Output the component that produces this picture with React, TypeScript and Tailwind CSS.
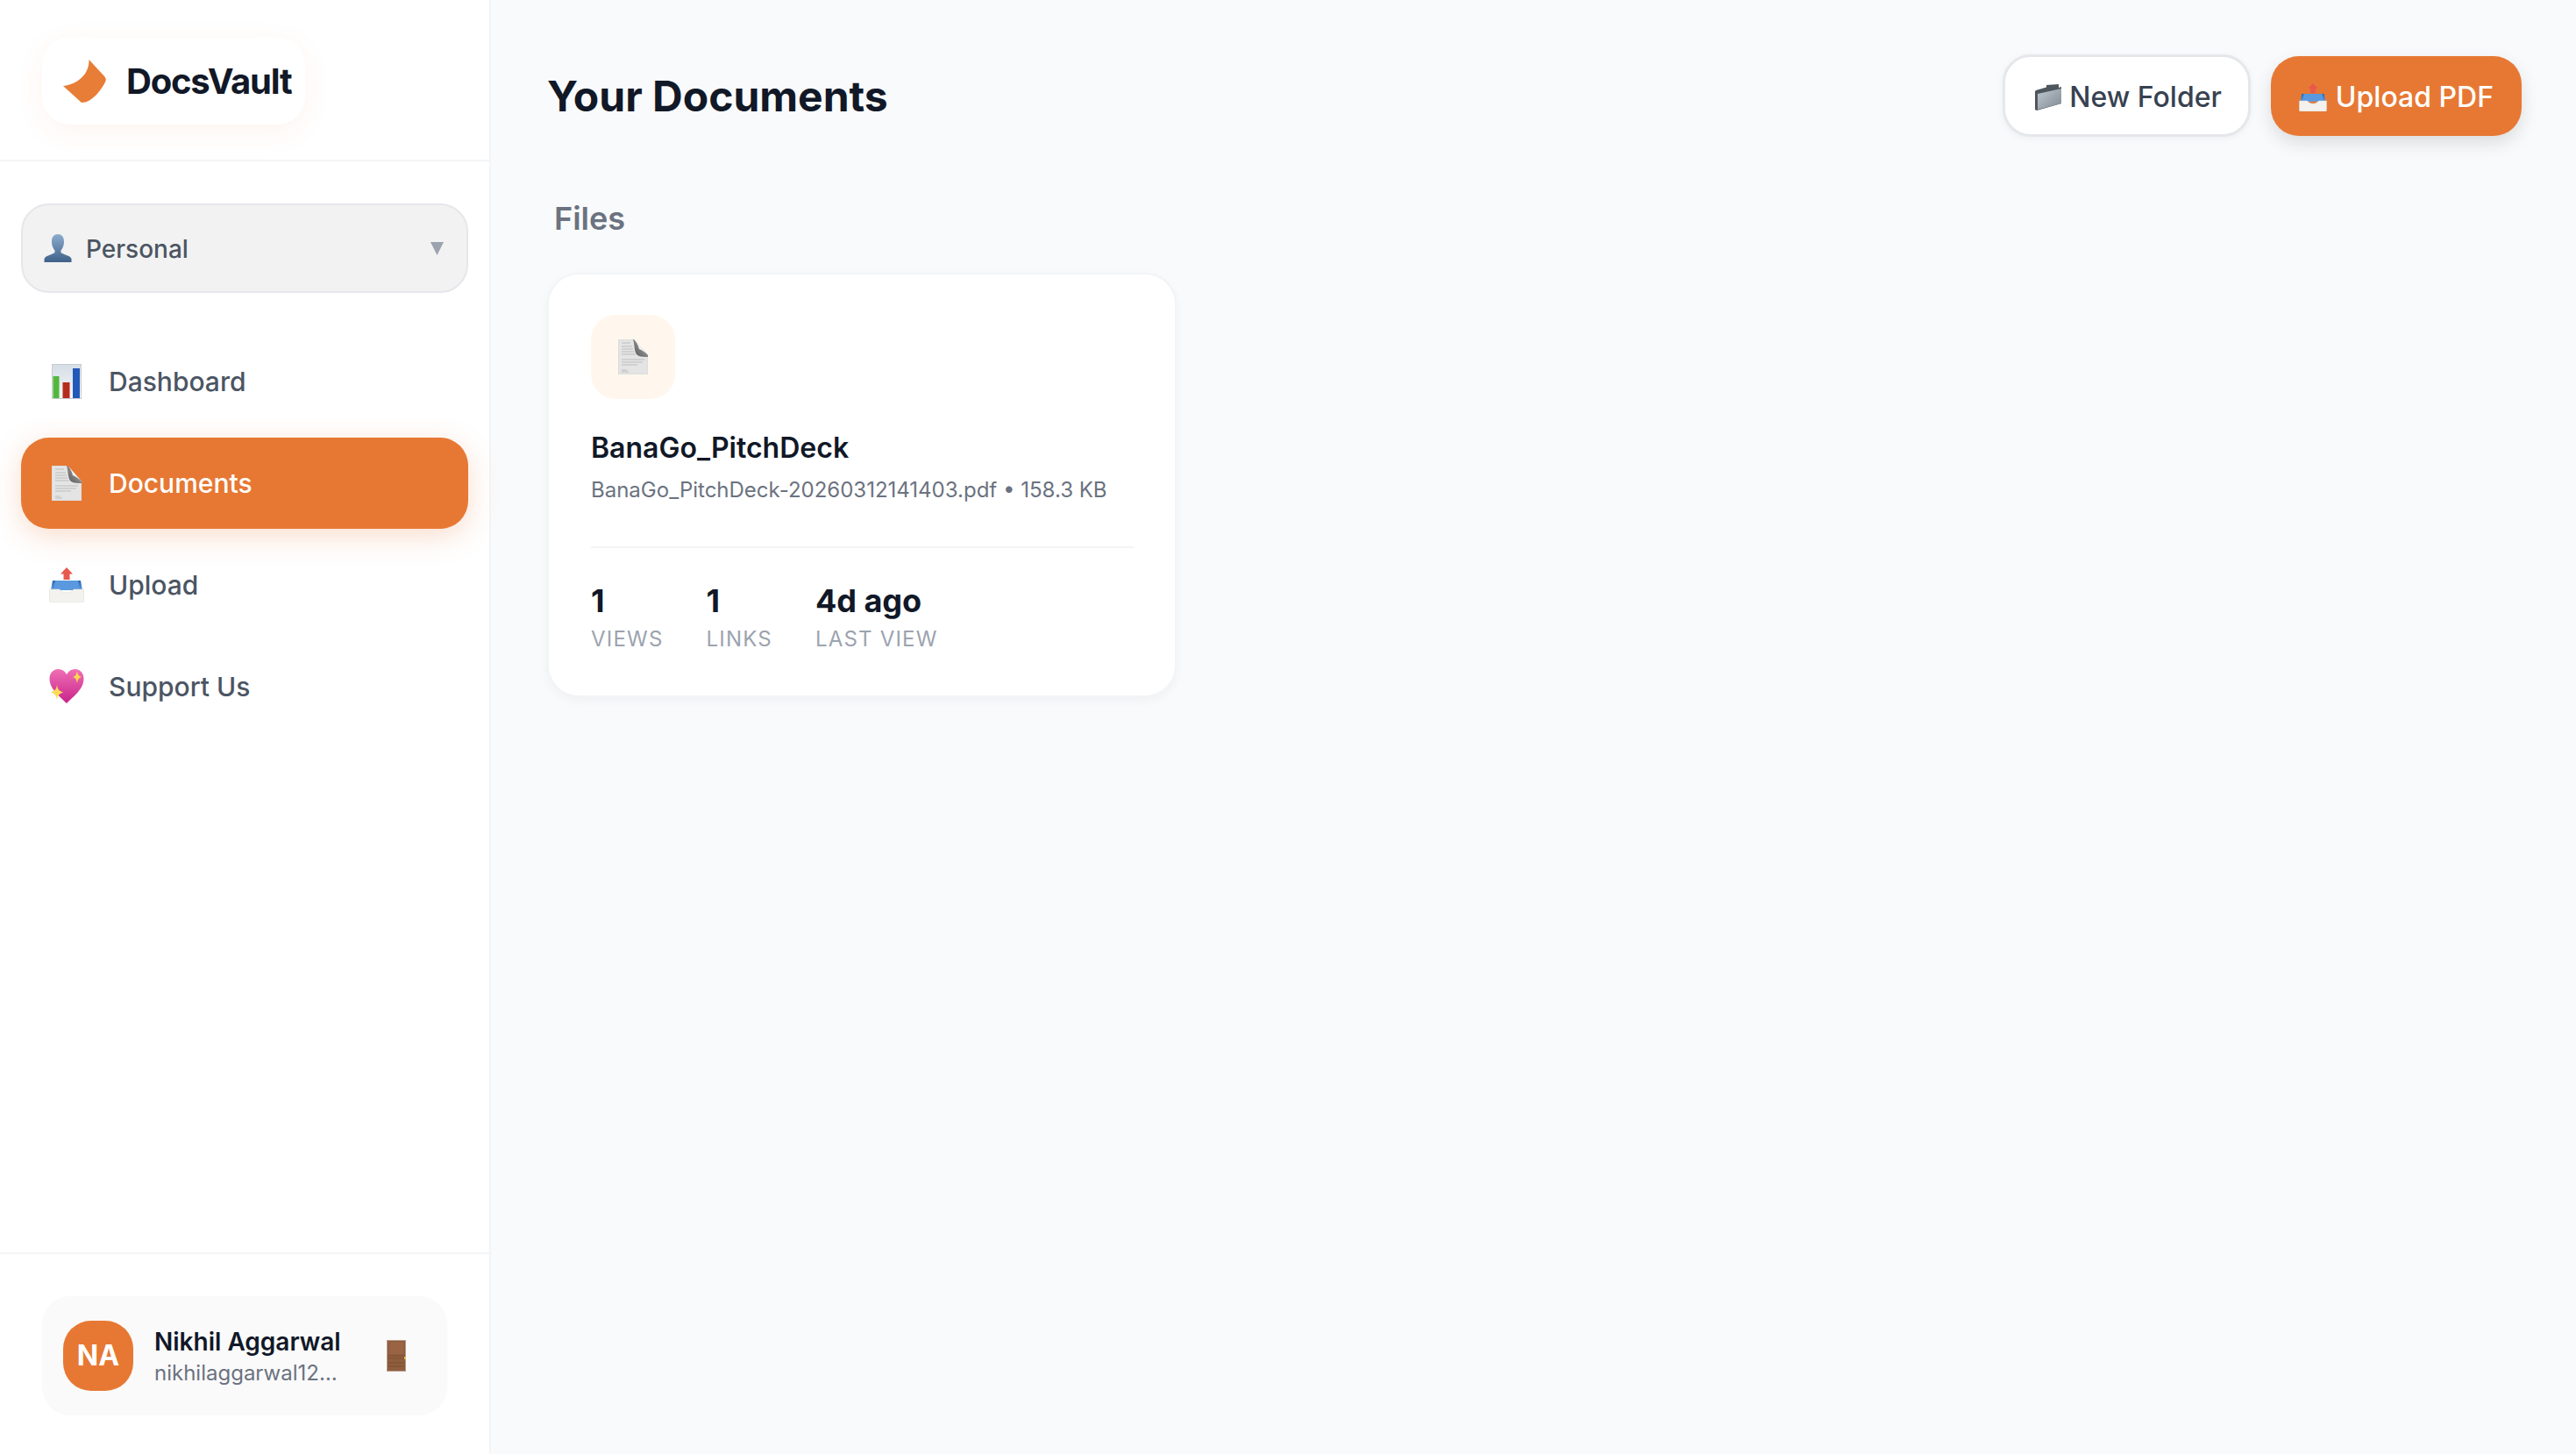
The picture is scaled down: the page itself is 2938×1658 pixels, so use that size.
import React from 'react';

const ChartIcon = () => (
  <svg viewBox="0 0 34 40" className="w-[34px] h-[40px]">
    <defs>
      <linearGradient id="chartBg" x1="0" y1="0" x2="0" y2="1">
        <stop offset="0" stopColor="#d5dde6" />
        <stop offset="1" stopColor="#f4f7fa" />
      </linearGradient>
    </defs>
    <rect width="34" height="40" fill="url(#chartBg)" />
    <rect x="1.500" y="14" width="7" height="26" fill="#52b83c" />
    <rect x="12.500" y="21" width="8" height="19" fill="#b72a1e" />
    <rect x="24" y="5" width="8" height="35" fill="#2159b8" />
    <rect x="0.500" y="0.500" width="33" height="39" fill="none" stroke="#c6ccd3" />
  </svg>
);

const DocIcon = () => (
  <svg viewBox="0 0 34 40" className="w-[34px] h-[40px]">
    <defs>
      <linearGradient id="docFold" x1="0" y1="1" x2="1" y2="0">
        <stop offset="0" stopColor="#555555" />
        <stop offset="0.55" stopColor="#8a8a8a" />
        <stop offset="1" stopColor="#dddddd" />
      </linearGradient>
    </defs>
    <path d="M0 0H17L34 18V40H0Z" fill="#e4e4e4" stroke="#d0d0d0" strokeWidth="0.8" />
    <path d="M4 4h10M4 8h12M4 11h13M4 14h14M4 17h16M4 23h26M4 26h24M4 29h18M4 35h6M4 37h8" stroke="#bdbdbd" strokeWidth="1" />
    <path d="M17 0C19 6 18 15 22 18C25 20 30 20 34 20V18L18 0Z" fill="url(#docFold)" />
    <path d="M19 0.500L34 18C30 14 27 12 24 11C23 7 21 3 19 0.500Z" fill="#f3f3f3" />
  </svg>
);

const InboxIcon = ({ size = 40 }: { size?: number }) => (
  <svg viewBox="0 0 40 40" width={size} height={size}>
    <defs>
      <linearGradient id="trayIn" x1="0" y1="0" x2="0" y2="1">
        <stop offset="0" stopColor="#2a69ad" />
        <stop offset="1" stopColor="#5b9be3" />
      </linearGradient>
    </defs>
    <path d="M20 0L27 7.500H23.500V14H16.500V7.500H13Z" fill="#e8584c" />
    <path d="M4 15H36L38 26H2Z" fill="url(#trayIn)" />
    <path d="M7 15H33L35 25H5Z" fill="#5a98e0" />
    <path d="M0.500 25H12C14 27.500 16 29 20 29C24 29 26 27.500 28 25H39.500V38C39.500 39 39 40 37.500 40H2.500C1 40 0.500 39 0.500 38Z" fill="#f3f2ee" stroke="#dcdbd6" strokeWidth="0.6" />
  </svg>
);

const HeartIcon = () => (
  <svg viewBox="0 0 40 40" className="w-[40px] h-[40px]">
    <defs>
      <linearGradient id="heartFill" x1="0" y1="0" x2="0" y2="1">
        <stop offset="0" stopColor="#ef6fb4" />
        <stop offset="1" stopColor="#c9238a" />
      </linearGradient>
    </defs>
    <path d="M20 39C13 32 0.500 23 0.500 11C0.500 4 5 0 10.500 0C14.500 0 18 2 20 6C22 2 25.500 0 29.500 0C35 0 39.500 4 39.500 11C39.500 23 27 32 20 39Z" fill="url(#heartFill)" />
    <path d="M32 2C32.800 6.500 33.800 7.800 37 9C33.800 10.200 32.800 11.500 32 16C31.200 11.500 30.200 10.200 27 9C30.200 7.800 31.200 6.500 32 2Z" fill="#fbd84a" />
    <path d="M9 18C10 23.500 11.300 25 16.500 26.500C11.300 28 10 29.500 9 35C8 29.500 6.700 28 1.500 26.500C6.700 25 8 23.500 9 18Z" fill="#fcdc55" />
  </svg>
);

const PersonIcon = () => (
  <svg viewBox="0 0 32 32" className="w-[32px] h-[32px]">
    <defs>
      <linearGradient id="bust" x1="0" y1="0" x2="0" y2="1">
        <stop offset="0" stopColor="#8cadcf" />
        <stop offset="1" stopColor="#3f6189" />
      </linearGradient>
    </defs>
    <path d="M16 0C21 0 23 4 23 8.500C23 13 21 17 19.500 18.500V21C22 23.500 30 24 31.500 28V32H0.500V28C2 24 10 23.500 12.500 21V18.500C11 17 9 13 9 8.500C9 4 11 0 16 0Z" fill="url(#bust)" />
  </svg>
);

const DoorIcon = () => (
  <svg viewBox="0 0 22 36" className="w-[22px] h-[36px]">
    <rect width="22" height="36" fill="#b8998a" />
    <rect x="1" y="1" width="20" height="34" fill="#8f5e3f" />
    <rect x="3" y="3" width="16" height="13" fill="#9a6444" />
    <path d="M1 18H21M1 21H21M1 26H21M1 30H21" stroke="#7c4e31" strokeWidth="1" />
    <rect x="20" y="19" width="2" height="3" fill="#dcbf4d" />
  </svg>
);

const FolderIcon = () => (
  <svg viewBox="0 0 30 30" className="w-[30px] h-[30px]">
    <defs>
      <linearGradient id="folderFill" x1="0" y1="0" x2="1" y2="1">
        <stop offset="0" stopColor="#c0c8d0" />
        <stop offset="1" stopColor="#7f8992" />
      </linearGradient>
    </defs>
    <path d="M1 7L13 3.500V1L27 0V4L30 3V22L2 30L0 29V8Z" fill="#4e565e" />
    <path d="M3 11L30 5V22L3 29Z" fill="url(#folderFill)" />
  </svg>
);

const Logo = () => (
  <svg viewBox="0 0 49 49" className="w-[49px] h-[49px]">
    <path d="M29.500 0L47 19C49.500 22 49 24 47.500 26.500C43 35 33 49 21 49L0 30C12 29 30 20 29.500 0Z" fill="#e87d37" />
  </svg>
);

const navItems = [
  { label: 'Dashboard', icon: <ChartIcon />, active: false },
  { label: 'Documents', icon: <DocIcon />, active: true },
  { label: 'Upload', icon: <InboxIcon />, active: false },
  { label: 'Support Us', icon: <HeartIcon />, active: false },
];

const stats = [
  { value: '1', label: 'Views' },
  { value: '1', label: 'Links' },
  { value: '4d ago', label: 'Last View' },
];

export default function App() {
  return (
    <div className="flex h-[1658px] w-full overflow-hidden bg-[#f9fafb] font-['Inter',sans-serif] text-[#111827]">
      <aside className="flex w-[560px] shrink-0 flex-col border-r-2 border-[#f3f4f6] bg-white">
        <div className="flex h-[184px] items-center border-b-2 border-[#f3f4f6] pl-12 pt-[3px]">
          <div className="flex h-[99px] w-[300px] items-center gap-[23px] rounded-[32px] bg-white pl-6 shadow-[0_8px_32px_rgba(232,120,51,0.08)]">
            <Logo />
            <span className="text-[40px] font-bold leading-none tracking-[-0.03em] text-[#111827]">DocsVault</span>
          </div>
        </div>

        <div className="mx-6 mt-12 flex h-[102px] items-center rounded-[32px] border-2 border-[#e5e7eb] bg-[#f2f2f2] pl-[24px] pr-[26px]">
          <PersonIcon />
          <span className="ml-[16px] flex-1 pt-[2px] text-[28px] font-medium text-[#4b5563]">Personal</span>
          <svg viewBox="0 0 15 15" className="h-[15px] w-[15px]">
            <path d="M0 0H15L7.500 15Z" fill="#9ca3af" />
          </svg>
        </div>

        <nav className="mt-[49px] flex flex-col gap-3 px-6">
          {navItems.map((item) => (
            <div
              key={item.label}
              className={
                item.active
                  ? 'flex h-[104px] items-center rounded-[32px] bg-[#e77833] pl-8 text-white shadow-[0_8px_32px_rgba(232,120,51,0.25)]'
                  : 'flex h-[104px] items-center rounded-[32px] pl-8 text-[#4b5563]'
              }
            >
              <span className="flex w-10 justify-center">{item.icon}</span>
              <span className="ml-[28px] text-[30px] font-medium">{item.label}</span>
            </div>
          ))}
        </nav>

        <div className="mt-auto border-t-2 border-[#f3f4f6] px-12 pb-[44px] pt-12">
          <div className="flex h-[136px] items-center rounded-[32px] bg-[#fafafa] pl-6">
            <div className="flex h-[80px] w-[80px] shrink-0 items-center justify-center rounded-[32px] bg-[#e77833] text-[32px] font-bold text-white">
              NA
            </div>
            <div className="ml-[24px] w-[217px]">
              <div className="whitespace-nowrap pt-[1px] text-[28px] font-semibold leading-[36px] text-[#111827]">Nikhil Aggarwal</div>
              <div className="mt-[2px] w-[217px] truncate text-[24px] leading-[32px] text-[#6b7280]">nikhilaggarwal12@gmail.com</div>
            </div>
            <span className="ml-[48px]">
              <DoorIcon />
            </span>
          </div>
        </div>
      </aside>

      <main className="flex-1 pl-[64px] pr-[62px] pt-[62px]">
        <header className="flex h-[94px] items-center justify-between">
          <h1 className="pt-[2px] text-[48px] font-bold text-[#111827]">Your Documents</h1>
          <div className="flex items-center gap-[23px]">
            <button className="flex h-[94px] items-center rounded-[32px] border-[3px] border-[#e5e7eb] bg-white pl-[34px] pr-[30px] pt-[3px] text-[32px] font-medium text-[#374151] shadow-[0_2px_8px_rgba(0,0,0,0.05)]">
              <FolderIcon />
              <span className="ml-[9px]">New Folder</span>
            </button>
            <button className="flex h-[91px] items-center rounded-[32px] bg-[#e77833] pl-[32px] pr-[32px] pt-[3px] text-[32px] font-medium text-white shadow-[0_8px_20px_rgba(0,0,0,0.12)]">
              <InboxIcon size={32} />
              <span className="ml-[10px]">Upload PDF</span>
            </button>
          </div>
        </header>

        <h2 className="mt-[69px] pl-[8px] text-[36px] font-semibold leading-[48px] text-[#6b7280]">Files</h2>

        <div className="mt-[38px] w-[718px] rounded-[36px] border-2 border-[#f3f4f6] bg-white pb-[49px] pl-[48px] pr-[47px] pt-[46px] shadow-[0_4px_12px_rgba(0,0,0,0.04)]">
          <div className="flex h-[96px] w-[96px] items-center justify-center rounded-[28px] bg-[#fff7ed]">
            <DocIcon />
          </div>
          <div className="mt-9 text-[32px] font-semibold leading-[40px] text-[#111827]">BanaGo_PitchDeck</div>
          <div className="mt-[12px] text-[24px] leading-[32px] text-[#6b7280]">BanaGo_PitchDeck-20260312141403.pdf • 158.3 KB</div>
          <div className="mt-12 border-t-2 border-[#f3f4f6] pt-[36px]">
            <div className="flex gap-[49px]">
              {stats.map((stat) => (
                <div key={stat.label}>
                  <div className="text-[36px] font-bold leading-[48px] text-[#111827]">{stat.value}</div>
                  <div className="mt-[5px] text-[24px] uppercase leading-[30px] tracking-[0.05em] text-[#9ca3af]">{stat.label}</div>
                </div>
              ))}
            </div>
          </div>
        </div>
      </main>
    </div>
  );
}
